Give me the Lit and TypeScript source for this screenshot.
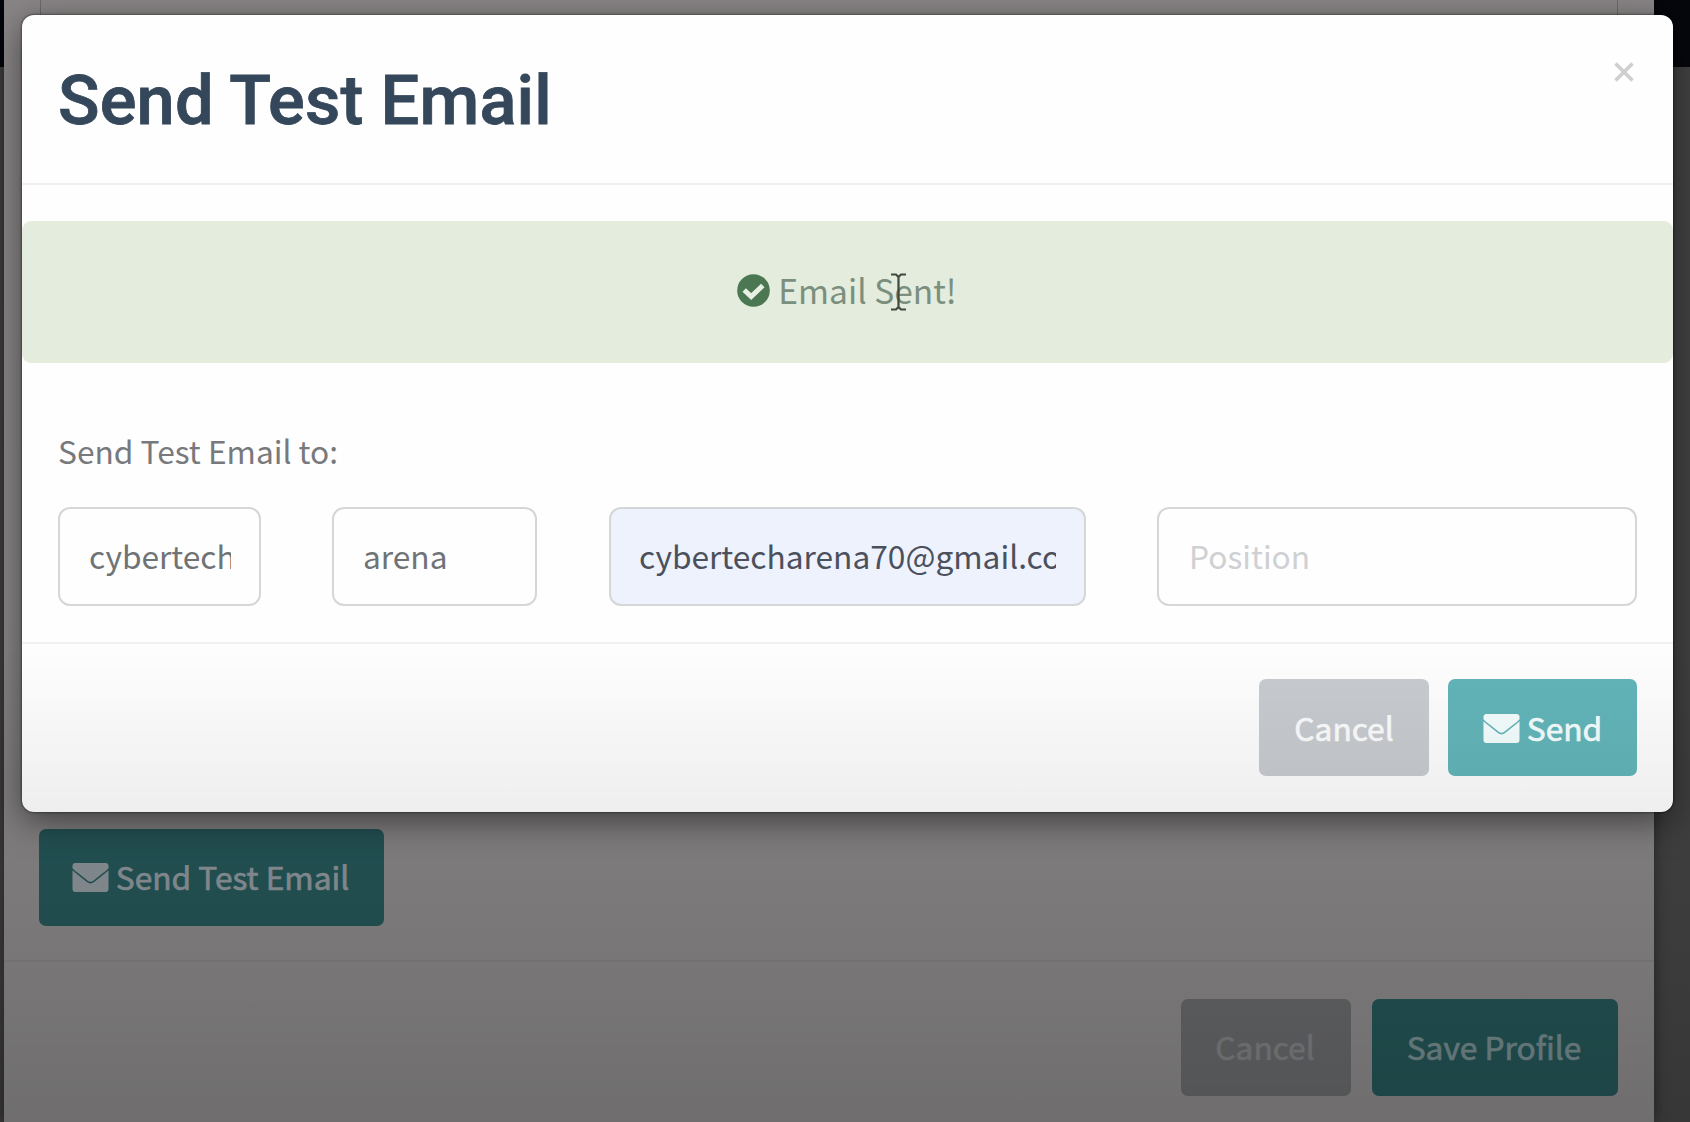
import { LitElement, html, css, svg } from "lit";
import { customElement } from "lit/decorators.js";

const envelope = html`<svg class="mail" viewBox="0 0 36 29" aria-hidden="true">
  ${svg`<path fill="currentColor" d="M3 0H33Q36 0 36 3V5.2Q34 7.6 30.5 10L21 17.6Q18 20 15 17.6L5.500 10Q2 7.600 0 5.200V3Q0 0 3 0Z"/>
  <path fill="currentColor" d="M0 7.200Q2 9.300 5 11.500L14 18.800Q18 22 22 18.800L31 11.500Q34 9.300 36 7.200V26Q36 29 33 29H3Q0 29 0 26Z"/>`}
</svg>`;

@customElement("app-root")
export class AppRoot extends LitElement {
  static styles = css`
    :host {
      display: block;
      position: relative;
      width: 1690px;
      height: 1122px;
      overflow: hidden;
      font-family: "Noto Sans CJK SC", "Open Sans", sans-serif;
      font-size: 31.7px;
      line-height: 46px;
    }
    * { box-sizing: border-box; }
    .page {
      display: flex;
      height: 100%;
      padding-left: 4px;
      background: linear-gradient(#05070d 0 67px, #424242 67px);
    }
    .profile {
      display: flex;
      flex-direction: column;
      width: 1650px;
      height: 100%;
      background: linear-gradient(#898586, #868485);
      box-shadow: 0 0 14px rgba(0, 0, 0, 0.45);
    }
    .fields {
      flex: none;
      height: 800px;
      margin: 0 36px 28px;
      border: solid #6b6a6b;
      border-width: 0 1px;
    }
    .actions { padding: 1px 35px 36px; height: 134px; border-bottom: 2px solid #7f7d7e; }
    .bar { display: flex; justify-content: flex-end; gap: 21px; padding: 37px 36px 0; }
    .btn {
      display: inline-flex;
      align-items: center;
      justify-content: center;
      gap: 7px;
      height: 97px;
      padding: 0 0 2px;
      border: 0;
      border-radius: 7px;
      font: inherit;
      white-space: nowrap;
      -webkit-text-stroke: 0.7px currentColor;
    }
    .profile .btn { padding: 0 2px 4px 0; }
    .mail { width: 37px; height: 29px; flex: none; margin-top: 4px; }
    .test { width: 345px; background: #245456; color: #8a9297; }
    .back { width: 170px; background: #646567; color: #7b7c7f; }
    .save { width: 246px; background: #235254; color: #728789; }
    .dialog {
      position: absolute;
      left: 22px;
      top: 15px;
      width: 1651px;
      height: 797px;
      display: flex;
      flex-direction: column;
      background: #fefefe;
      border-radius: 12px;
      box-shadow: 0 9px 34px rgba(0, 0, 0, 0.5), 0 0 2px 1px rgba(0, 0, 0, 0.35);
    }
    .head {
      display: flex;
      justify-content: space-between;
      height: 170px;
      padding: 39px 39px 0 36px;
      border-bottom: 2px solid #f1f1f1;
    }
    .title {
      margin: 0;
      font: 500 68.6px/94px Roboto, sans-serif;
      letter-spacing: 0.15px;
      color: #35475a;
      white-space: nowrap;
      -webkit-text-stroke: 0.8px currentColor;
    }
    .close { width: 20px; height: 20px; margin-top: 8px; color: #cfcfcf; }
    .alert {
      display: flex;
      align-items: center;
      justify-content: center;
      gap: 8px;
      height: 142px;
      margin-top: 36px;
      padding: 0 1px 2px 0;
      border-radius: 9px;
      background: #e4ecdd;
      color: #7b8f7e;
      font-size: 33.5px;
    }
    .alert span { margin-top: -3px; }
    .check { width: 33px; height: 33px; color: #4b7752; margin-top: -2px; }
    .form { height: 281px; padding: 64px 36px 0; border-bottom: 2px solid #f1f1f1; }
    .label { display: block; color: #77797c; }
    .row { display: flex; margin-top: 34px; }
    .input {
      height: 99px;
      padding: 0 28px 4px 29px;
      border: 2px solid #d5d6d8;
      border-radius: 12px;
      background: #fefefe;
      color: #6f7376;
      font: inherit;
      outline: none;
      margin-right: 71px;
      min-width: 0;
    }
    .input::placeholder { color: #cfd0d3; opacity: 1; }
    .first { width: 203px; }
    .last { width: 205px; margin-right: 72px; }
    .email { width: 477px; padding-left: 28px; background: #edf2fd; color: #4b505c; }
    .position { width: 480px; margin-right: 0; padding-left: 30px; }
    .foot { display: flex; justify-content: flex-end; gap: 19px; padding: 35px 36px 0; }
    .cancel { width: 170px; background: #c8cbcf; color: #fbfcfd; }
    .send { width: 189px; background: #62b5b9; color: #f4feff; }
    .cursor { position: absolute; left: 890px; top: 273px; width: 17px; height: 38px; }
    .shade {
      position: absolute;
      inset: 0;
      pointer-events: none;
      background: linear-gradient(transparent 640px, rgba(0, 0, 0, 0.064) 812px, rgba(0, 0, 0, 0.1) 950px, rgba(0, 0, 0, 0.17) 1122px);
    }
  `;

  render() {
    return html`
      <main class="page">
        <section class="profile">
          <div class="fields"></div>
          <div class="actions"><button class="btn test">${envelope}<span>Send Test Email</span></button></div>
          <div class="bar">
            <button class="btn back">Cancel</button>
            <button class="btn save">Save Profile</button>
          </div>
        </section>
      </main>
      <section class="dialog" role="dialog">
        <header class="head">
          <h1 class="title">Send Test Email</h1>
          <svg class="close" viewBox="0 0 20 20"><path d="M1.500 1.500L18.500 18.500M18.500 1.500L1.500 18.500" stroke="currentColor" stroke-width="3.800" fill="none"/></svg>
        </header>
        <div class="alert">
          <svg class="check" viewBox="0 0 33 33"><circle cx="16.500" cy="16.500" r="16.300" fill="currentColor"/><path d="M7.200 16L14.200 22.500L25.800 11.500" stroke="#e8f0e3" stroke-width="5" fill="none"/></svg>
          <span>Email Sent!</span>
        </div>
        <div class="form">
          <label class="label">Send Test Email to:</label>
          <div class="row">
            <input class="input first" value="cybertech" />
            <input class="input last" value="arena" />
            <input class="input email" value="cybertecharena70@gmail.com" />
            <input class="input position" placeholder="Position" />
          </div>
        </div>
        <footer class="foot">
          <button class="btn cancel">Cancel</button>
          <button class="btn send">${envelope}<span>Send</span></button>
        </footer>
      </section>
      <svg class="cursor" viewBox="0 0 17 38"><path d="M1 1.500H6L8.500 4L11 1.500H16M8.500 4V34M1 36.500H6L8.500 34L11 36.500H16" stroke="#3f4a3f" stroke-width="2.200" fill="none"/></svg>
      <div class="shade"></div>
    `;
  }
}
